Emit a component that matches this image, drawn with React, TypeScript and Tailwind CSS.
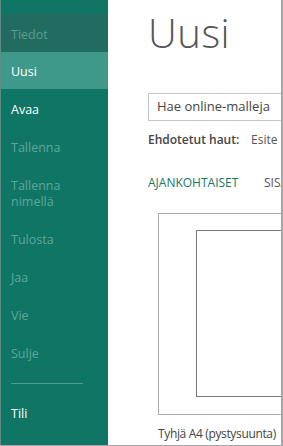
const items = [
  { label: 'Tallenna', h: 'h-[38px]' },
  { label: 'Tallenna nimellä', h: 'h-[54px]' },
  { label: 'Tulosta', h: 'h-[38px]' },
  { label: 'Jaa', h: 'h-[38px]' },
  { label: 'Vie', h: 'h-[38px]' },
  { label: 'Sulje', h: 'h-[38px]' },
];

export default function App() {
  return (
    <div
      className="w-[283px] h-[446px] flex overflow-hidden bg-white border-r-2 border-b border-[#a6a6a6]"
      style={{ fontFamily: '"Open Sans", "Noto Sans", sans-serif' }}
    >
      {/* sidebar */}
      <nav className="w-[108px] shrink-0 bg-[#0f7565] border-l border-[#5d8e86] flex flex-col pt-[14px] text-[12.5px]">
        <div className="h-[38px] flex items-center pl-[10px] pt-[4px] bg-[#216b60] text-[#5f9c92]">Tiedot</div>
        <div className="h-[37px] flex items-center pl-[10px] pt-[4px] bg-[#3f998a] text-white">Uusi</div>
        <div className="h-[38px] flex items-center pl-[10px] pt-[4px] text-white">Avaa</div>
        {items.map((it) => (
          <div key={it.label} className={`${it.h} flex items-center pl-[10px] pr-4 pt-[4px] leading-[16px] text-[#5fa69a]`}>
            {it.label}
          </div>
        ))}
        <div className="mt-[12px] ml-[10px] w-[72px] h-px bg-[#4f9c8f]" />
        <div className="h-[60px] flex items-center pl-[10px] text-white">Tili</div>
      </nav>

      {/* main */}
      <main className="flex-1 overflow-hidden pl-[40px] text-[#444]">
        <h1 className="mt-[11px] text-[40px] leading-[44px] font-light text-[#555] tracking-[0.5px]">Uusi</h1>
        <div className="mt-[38px] w-[200px] h-[28px] border border-[#c6c6c6] flex items-center pl-[8px] text-[13px] text-[#444] whitespace-nowrap">
          Hae online-malleja
        </div>
        <div className="mt-[10px] flex text-[12px] whitespace-nowrap">
          <span className="shrink-0 font-semibold text-[#444] w-[103px]">Ehdotetut haut:</span>
          <span className="shrink-0 text-[#555]">Esite</span>
        </div>
        <div className="mt-[25px] flex text-[12px] whitespace-nowrap">
          <span className="shrink-0 text-[#1b7668] w-[116px]">AJANKOHTAISET</span>
          <span className="shrink-0 text-[#555]">SISÄINEN</span>
        </div>
        <div className="mt-[21px] ml-[10px] w-[200px] h-[202px] border border-[#a9a9a9] pt-[16px] pl-[37px]">
          <div className="w-[200px] h-[167px] border border-[#777]" />
        </div>
        <div className="mt-[10px] ml-[10px] text-[12px] tracking-[-0.35px] text-[#444] whitespace-nowrap">Tyhjä A4 (pystysuunta)</div>
      </main>
    </div>
  );
}
